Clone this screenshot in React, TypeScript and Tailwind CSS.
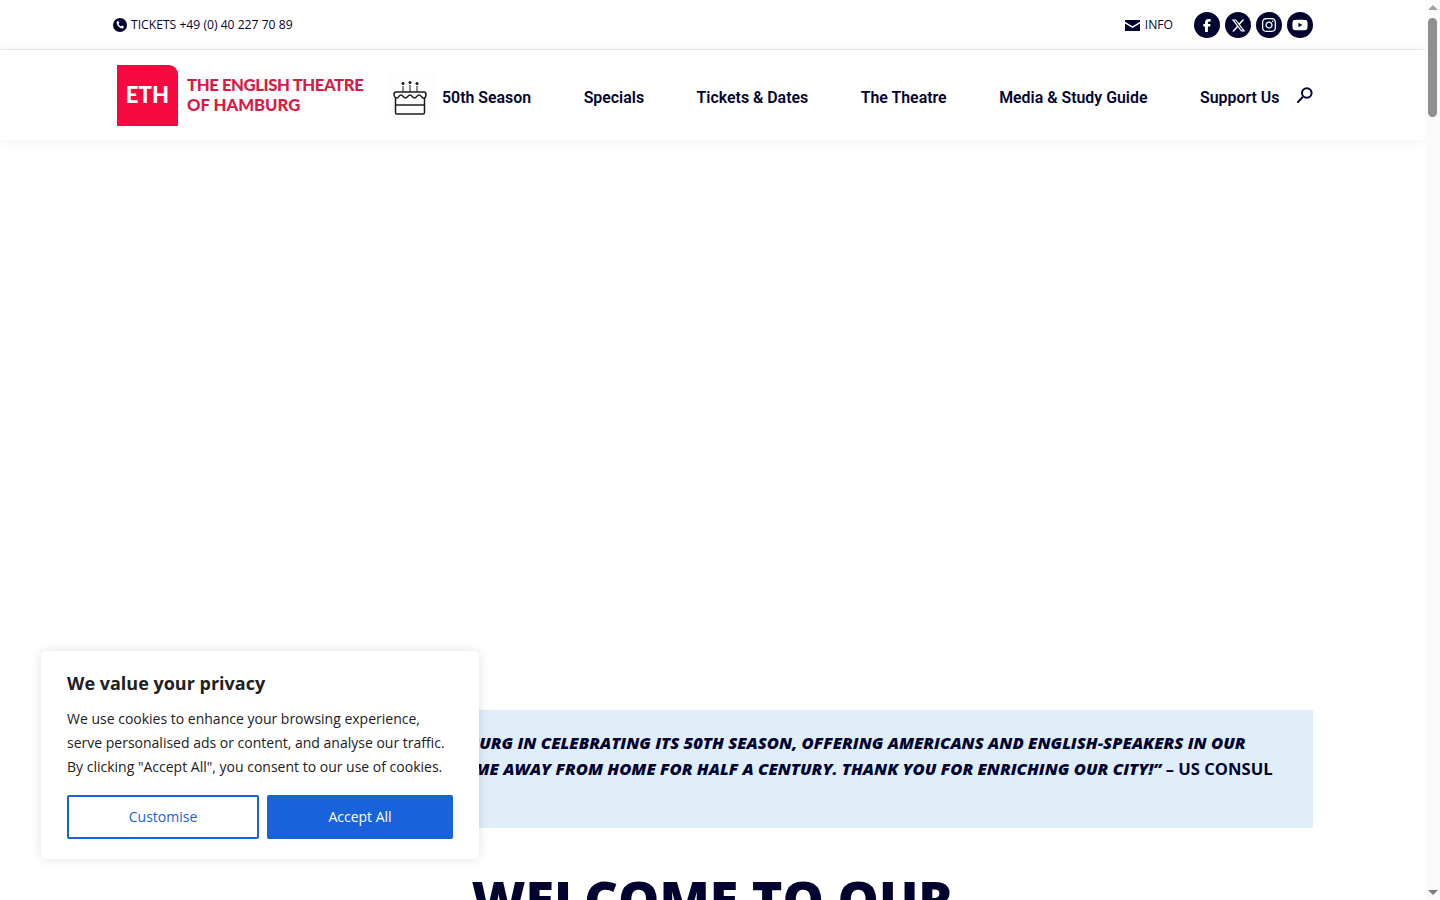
import { FaFacebookF, FaInstagram, FaXTwitter, FaYoutube } from "react-icons/fa6";

const navItems = ["Specials", "Tickets & Dates", "The Theatre", "Media & Study Guide", "Support Us"];

const socials = [
  { name: "facebook", icon: <FaFacebookF className="w-3 h-[13px]" /> },
  { name: "x", icon: <FaXTwitter className="w-[15px] h-[15px]" /> },
  { name: "instagram", icon: <FaInstagram className="w-4 h-4" /> },
  { name: "youtube", icon: <FaYoutube className="w-4 h-4" /> },
];

const PhoneIcon = () => (
  <svg viewBox="0 0 14 14" className="w-[14px] h-[14px] shrink-0">
    <circle cx="7" cy="7" r="7" fill="#03032f" />
    <path
      d="M4.600 3.200l1 .1.7 1.800-.8.9c.4 1 1.300 1.900 2.400 2.400l.9-.8 1.800.7.1 1c0 .6-.5 1.100-1.100 1.100-3 0-5.900-2.900-5.900-5.900 0-.7.4-1.200 0-1.300z"
      fill="#fff"
    />
  </svg>
);

const MailIcon = () => (
  <svg viewBox="0 0 15 11" className="w-[15px] h-[11px] shrink-0">
    <path d="M0 0h15v1.800L7.500 6.200 0 1.800z" fill="#03032f" />
    <path d="M0 3.600l7.500 4.400L15 3.600V11H0z" fill="#03032f" />
  </svg>
);

const CakeIcon = () => (
  <svg viewBox="0 0 36 36" fill="none" stroke="#1c1c1c" strokeWidth="1.500" className="w-9 h-9 mt-[6px]">
    <path d="M11 6v6M18 5v7M25 6v6" strokeWidth="1" />
    <circle cx="11" cy="3.500" r="1.500" fill="#1c1c1c" stroke="none" />
    <circle cx="18" cy="2.500" r="1.500" fill="#1c1c1c" stroke="none" />
    <circle cx="25" cy="3.500" r="1.500" fill="#1c1c1c" stroke="none" />
    <path d="M4 12h28c1.500 0 2 1 2 2.500 0 1.800-1 3.500-2.500 3.500s-2.500-3-4.500-3-2.500 3-4.500 3-2.500-3-4.500-3-2.500 3-4.500 3-2.500-3-4.500-3-2.500 3-4 3S2 16.300 2 14.500C2 13 2.500 12 4 12z" />
    <path d="M3.500 18v14.500c0 .8.700 1.500 1.500 1.500h26c.8 0 1.500-.7 1.500-1.500V18" />
    <path d="M3.500 25h29" />
  </svg>
);

const SearchIcon = () => (
  <svg viewBox="0 0 16 16" fill="none" stroke="#03032f" strokeWidth="2" className="w-4 h-4">
    <circle cx="9.800" cy="6" r="4.800" />
    <path d="M6.200 9.500L1 15" strokeLinecap="round" />
  </svg>
);

const Logo = () => (
  <div className="flex items-center gap-[9px] w-[247px] shrink-0">
    <div className="w-[61px] h-[61px] shrink-0 bg-[#f7083f] rounded-tr-[9px] flex items-center justify-center">
      <span className="text-white text-[22px] font-black font-['Lato',sans-serif] leading-none tracking-[0.2px]">ETH</span>
    </div>
    <div className="text-[#d91a45] text-[16.700px] leading-[20px] font-black font-['Lato',sans-serif] whitespace-nowrap tracking-[-0.4px]">
      <div>THE ENGLISH THEATRE</div>
      <div className="tracking-[0px]">OF HAMBURG</div>
    </div>
  </div>
);

const TopBar = () => (
  <div className="h-[50px] shrink-0 pt-px border-b border-[#ececec] pl-[113px] pr-[112px] flex items-center justify-between text-[12.150px] text-[#03032f] font-['Open_Sans',sans-serif]">
    <div className="flex items-center gap-1">
      <PhoneIcon />
      <span>TICKETS +49 (0) 40 227 70 89</span>
    </div>
    <div className="flex items-center">
      <MailIcon />
      <span className="ml-[5px] mr-[21px]">INFO</span>
      <div className="flex gap-[5px]">
        {socials.map((s) => (
          <a key={s.name} className="w-[26px] h-[26px] rounded-full bg-[#03032f] text-white flex items-center justify-center">
            {s.icon}
          </a>
        ))}
      </div>
    </div>
  </div>
);

const Header = () => (
  <header className="relative h-[90px] shrink-0 bg-white shadow-[0_0_15px_rgba(0,0,0,0.07)] pl-[117px] pr-[112px] flex items-center font-['Roboto',sans-serif] text-[15.900px] font-semibold text-[#03032f]">
    <Logo />
    <div className="ml-[22px] w-12 h-12 bg-[#fdfdfd] flex items-center justify-center shrink-0">
      <CakeIcon />
    </div>
    <nav className="flex items-center ml-2 mt-[5px] gap-[52.500px] whitespace-nowrap">
      <a>50th Season</a>
      {navItems.map((n) => (
        <a key={n}>{n}</a>
      ))}
    </nav>
    <div className="ml-auto">
      <SearchIcon />
    </div>
  </header>
);

const Scrollbar = () => (
  <div className="w-[15px] shrink-0 bg-[#fafafa] flex flex-col items-center justify-between py-[5px] relative">
    <div className="w-0 h-0 border-x-[5px] border-x-transparent border-b-[5px] border-b-[#a3a3a3]" />
    <div className="absolute top-[18px] left-[3px] w-[9px] h-[99px] rounded-full bg-[#8f8f8f]" />
    <div className="w-0 h-0 border-x-[5px] border-x-transparent border-t-[5px] border-t-[#7f7f7f]" />
  </div>
);

const CookieBanner = () => (
  <div className="absolute left-[41px] top-[651px] w-[438px] h-[208px] bg-white rounded-[5px] shadow-[0_0_12px_rgba(0,0,0,0.12)] px-[26px] pt-[20px] font-['Open_Sans',sans-serif]">
    <h2 className="text-[18px] leading-[25px] font-bold text-[#212121]">We value your privacy</h2>
    <p className="mt-[11px] text-[14px] leading-[24px] text-[#212121] whitespace-nowrap">
      We use cookies to enhance your browsing experience,
      <br />
      serve personalised ads or content, and analyse our traffic.
      <br />
      By clicking "Accept All", you consent to our use of cookies.
    </p>
    <div className="mt-4 flex gap-2">
      <button className="w-[192px] h-11 pb-0.5 border-2 border-[#1863dc] rounded-[2px] text-[14px] text-[#1863dc]">Customise</button>
      <button className="w-[186px] h-11 pb-0.5 bg-[#1863dc] rounded-[2px] text-[14px] text-white">Accept All</button>
    </div>
  </div>
);

export default function App() {
  return (
    <div className="relative h-[900px] overflow-hidden flex bg-white">
      <div className="flex-1 min-w-0 flex flex-col">
        <TopBar />
        <Header />
        <main className="mx-[112px] mt-[570px] shrink-0 font-['Open_Sans',sans-serif] text-[#03032f]">
          <div className="h-[118px] bg-[#e0eefa] pl-[30px] pr-10 pt-5 text-[16.600px] leading-[26px] font-extrabold uppercase whitespace-nowrap">
            <em>
              “We join the English Theatre of Hamburg in celebrating its 50th season, offering Americans and English-speakers in our
              <br />
              community and across our city a home away from home for half a century. Thank you for enriching our city!”
            </em>{" "}
            <span className="font-bold">– US Consul</span>
            <br />
            General
          </div>
          <h1 className="mt-[39px] text-[52px] leading-[64px] font-extrabold text-center uppercase">Welcome to our</h1>
        </main>
      </div>
      <Scrollbar />
      <CookieBanner />
    </div>
  );
}
